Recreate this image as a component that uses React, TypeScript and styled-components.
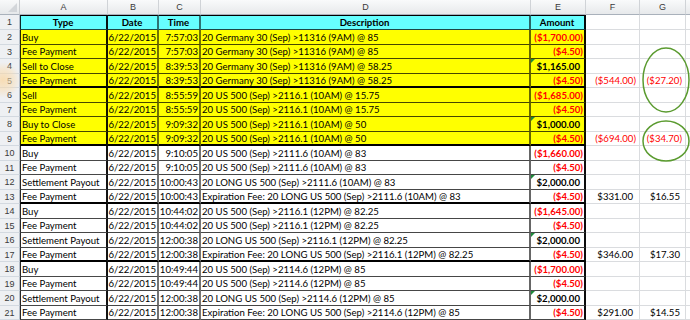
import React from 'react';
import styled, { createGlobalStyle } from 'styled-components';

const Global = createGlobalStyle`
  html, body { margin: 0; padding: 0; background: #fff; }
  body { font-family: Lato, "Liberation Sans", sans-serif; }
`;

type Col = 'a' | 'b' | 'c' | 'd' | 'e';

interface Row {
  type: string;
  date: string;
  time: string;
  desc: string;
  amt: string;
  f?: string;
  g?: string;
  yellow?: boolean;
  thick?: boolean;
}

const rows: Row[] = [
  { type: 'Buy', date: '6/22/2015', time: '7:57:03', desc: '20 Germany 30 (Sep) >11316 (9AM) @ 85', amt: '($1,700.00)', yellow: true },
  { type: 'Fee Payment', date: '6/22/2015', time: '7:57:03', desc: '20 Germany 30 (Sep) >11316 (9AM) @ 85', amt: '($4.50)', yellow: true },
  { type: 'Sell to Close', date: '6/22/2015', time: '8:39:53', desc: '20 Germany 30 (Sep) >11316 (9AM) @ 58.25', amt: '$1,165.00', yellow: true },
  { type: 'Fee Payment', date: '6/22/2015', time: '8:39:53', desc: '20 Germany 30 (Sep) >11316 (9AM) @ 58.25', amt: '($4.50)', f: '($544.00)', g: '($27.20)', yellow: true, thick: true },
  { type: 'Sell', date: '6/22/2015', time: '8:55:59', desc: '20 US 500 (Sep) >2116.1 (10AM) @ 15.75', amt: '($1,685.00)', yellow: true },
  { type: 'Fee Payment', date: '6/22/2015', time: '8:55:59', desc: '20 US 500 (Sep) >2116.1 (10AM) @ 15.75', amt: '($4.50)', yellow: true },
  { type: 'Buy to Close', date: '6/22/2015', time: '9:09:32', desc: '20 US 500 (Sep) >2116.1 (10AM) @ 50', amt: '$1,000.00', yellow: true },
  { type: 'Fee Payment', date: '6/22/2015', time: '9:09:32', desc: '20 US 500 (Sep) >2116.1 (10AM) @ 50', amt: '($4.50)', f: '($694.00)', g: '($34.70)', yellow: true, thick: true },
  { type: 'Buy', date: '6/22/2015', time: '9:10:05', desc: '20 US 500 (Sep) >2111.6 (10AM) @ 83', amt: '($1,660.00)' },
  { type: 'Fee Payment', date: '6/22/2015', time: '9:10:05', desc: '20 US 500 (Sep) >2111.6 (10AM) @ 83', amt: '($4.50)' },
  { type: 'Settlement Payout', date: '6/22/2015', time: '10:00:43', desc: '20 LONG US 500 (Sep) >2111.6 (10AM) @ 83', amt: '$2,000.00' },
  { type: 'Fee Payment', date: '6/22/2015', time: '10:00:43', desc: 'Expiration Fee: 20 LONG US 500 (Sep) >2111.6 (10AM) @ 83', amt: '($4.50)', f: '$331.00', g: '$16.55', thick: true },
  { type: 'Buy', date: '6/22/2015', time: '10:44:02', desc: '20 US 500 (Sep) >2116.1 (12PM) @ 82.25', amt: '($1,645.00)' },
  { type: 'Fee Payment', date: '6/22/2015', time: '10:44:02', desc: '20 US 500 (Sep) >2116.1 (12PM) @ 82.25', amt: '($4.50)' },
  { type: 'Settlement Payout', date: '6/22/2015', time: '12:00:38', desc: '20 LONG US 500 (Sep) >2116.1 (12PM) @ 82.25', amt: '$2,000.00' },
  { type: 'Fee Payment', date: '6/22/2015', time: '12:00:38', desc: 'Expiration Fee: 20 LONG US 500 (Sep) >2116.1 (12PM) @ 82.25', amt: '($4.50)', f: '$346.00', g: '$17.30', thick: true },
  { type: 'Buy', date: '6/22/2015', time: '10:49:44', desc: '20 US 500 (Sep) >2114.6 (12PM) @ 85', amt: '($1,700.00)' },
  { type: 'Fee Payment', date: '6/22/2015', time: '10:49:44', desc: '20 US 500 (Sep) >2114.6 (12PM) @ 85', amt: '($4.50)' },
  { type: 'Settlement Payout', date: '6/22/2015', time: '12:00:38', desc: '20 LONG US 500 (Sep) >2114.6 (12PM) @ 85', amt: '$2,000.00' },
  { type: 'Fee Payment', date: '6/22/2015', time: '12:00:38', desc: 'Expiration Fee: 20 LONG US 500 (Sep) >2114.6 (12PM) @ 85', amt: '($4.50)', f: '$291.00', g: '$14.55' },
];

const Sheet = styled.div`
  position: relative;
  display: grid;
  grid-template-columns: 20px 88px 51px 42px 330px 55px 54px 46px 40px;
  grid-template-rows: 15px 15px repeat(10, 15px 14px);
  width: 690px;
  height: 320px;
  overflow: hidden;
  font-size: 9.6px;
  color: #000;
`;

const Corner = styled.div`
  position: relative;
  box-sizing: border-box;
  background: linear-gradient(#f8f9fa, #e6e8ea);
  border-right: 1px solid #c9ccd0;
  border-bottom: 1px solid #a9b1bb;
  &::after {
    content: '';
    position: absolute;
    right: 2px;
    bottom: 2px;
    border-left: 9px solid transparent;
    border-bottom: 9px solid #d3d6da;
  }
`;

const ColHead = styled.div`
  box-sizing: border-box;
  background: linear-gradient(#f9fafb, #e7e9eb);
  border-right: 1px solid #d0d3d7;
  border-bottom: 1px solid #a9b1bb;
  display: flex;
  align-items: center;
  justify-content: center;
  color: #3a3a3a;
  font-family: "Liberation Sans", Arial, sans-serif;
  font-size: 9px;
`;

const RowHead = styled.div`
  box-sizing: border-box;
  background: #eef0f3;
  border-right: 1px solid #b4bdc8;
  border-bottom: 1px solid #d3d9e0;
  display: flex;
  align-items: center;
  justify-content: center;
  color: #3a3a3a;
  font-family: "Liberation Sans", Arial, sans-serif;
  font-size: 9px;
`;

const edgeAlpha: Record<Col, number> = { a: 0.92, b: 0.55, c: 0.55, d: 0.6, e: 0.95 };

const DataCell = styled.div<{
  $col: Col;
  $bg: string;
  $align: 'left' | 'right' | 'center';
  $thick?: boolean;
  $top?: boolean;
  $bold?: boolean;
  $red?: boolean;
  $pad?: number;
  $flag?: boolean;
}>`
  position: relative;
  box-sizing: border-box;
  min-width: 0;
  background: ${(p) => p.$bg};
  border-right: 2px solid rgba(0, 0, 0, ${(p) => edgeAlpha[p.$col]});
  border-left: ${(p) => (p.$col === 'a' ? '1px solid rgba(0,0,0,0.85)' : '0')};
  border-top: ${(p) => (p.$top ? '1px solid #000' : '0')};
  border-bottom: ${(p) => (p.$thick ? '2px solid #000' : '1px solid rgba(0,0,0,0.72)')};
  display: flex;
  align-items: center;
  justify-content: ${(p) => (p.$align === 'left' ? 'flex-start' : p.$align === 'right' ? 'flex-end' : 'center')};
  padding: 0 ${(p) => p.$pad ?? 1}px 0 ${(p) => (p.$align === 'left' ? 1 : 0)}px;
  white-space: nowrap;
  overflow: hidden;
  font-weight: ${(p) => (p.$bold ? 700 : 400)};
  color: ${(p) => (p.$red ? '#ff0000' : '#000')};
  &::before {
    content: '';
    display: ${(p) => (p.$flag ? 'block' : 'none')};
    position: absolute;
    left: 0;
    top: 0;
    border-top: 4px solid #1f8a3b;
    border-right: 4px solid transparent;
  }
`;

const Blank = styled.div<{ $red?: boolean; $pad: number }>`
  box-sizing: border-box;
  border-right: 1px solid #dadcdf;
  border-bottom: 1px solid #dadcdf;
  display: flex;
  align-items: center;
  justify-content: flex-end;
  padding-right: ${(p) => p.$pad}px;
  white-space: nowrap;
  color: ${(p) => (p.$red ? '#ff0000' : '#000')};
`;

const Overlay = styled.svg`
  position: absolute;
  left: 0;
  top: 0;
  pointer-events: none;
`;

const Glow = styled.div`
  position: absolute;
  left: -14px;
  top: 62px;
  width: 34px;
  height: 36px;
  border-radius: 50%;
  background: radial-gradient(circle, rgba(250, 214, 160, 0.75) 0%, rgba(250, 220, 175, 0.45) 45%, rgba(255, 230, 200, 0) 72%);
  pointer-events: none;
`;

const letters = ['A', 'B', 'C', 'D', 'E', 'F', 'G', ''];
const heads: { t: string; col: Col }[] = [
  { t: 'Type', col: 'a' },
  { t: 'Date', col: 'b' },
  { t: 'Time', col: 'c' },
  { t: 'Description', col: 'd' },
  { t: 'Amount', col: 'e' },
];

const isNeg = (v: string) => v.startsWith('(');

export default function App() {
  return (
    <>
      <Global />
      <Sheet>
        <Corner />
        {letters.map((l, i) => (
          <ColHead key={'h' + i}>{l}</ColHead>
        ))}
        <RowHead>1</RowHead>
        {heads.map((h) => (
          <DataCell key={h.t} $col={h.col} $bg="#66ffff" $align="center" $bold $top>
            {h.t}
          </DataCell>
        ))}
        <Blank $pad={2} />
        <Blank $pad={2} />
        <Blank $pad={2} />
        {rows.map((r, i) => {
          const bg = r.yellow ? '#ffff00' : '#ffffff';
          const neg = isNeg(r.amt);
          return (
            <React.Fragment key={i}>
              <RowHead>{i + 2}</RowHead>
              <DataCell $col="a" $bg={bg} $align="left" $thick={r.thick}>{r.type}</DataCell>
              <DataCell $col="b" $bg={bg} $align="right" $thick={r.thick}>{r.date}</DataCell>
              <DataCell $col="c" $bg={bg} $align="right" $thick={r.thick}>{r.time}</DataCell>
              <DataCell $col="d" $bg={bg} $align="left" $thick={r.thick}>{r.desc}</DataCell>
              <DataCell $col="e" $bg={bg} $align="right" $thick={r.thick} $bold $red={neg} $pad={neg ? 1 : 4} $flag={!neg}>
                {r.amt}
              </DataCell>
              <Blank $pad={r.f && !isNeg(r.f) ? 6 : 3} $red={r.f ? isNeg(r.f) : false}>{r.f}</Blank>
              <Blank $pad={r.g && !isNeg(r.g) ? 5 : 3} $red={r.g ? isNeg(r.g) : false}>{r.g}</Blank>
              <Blank $pad={2} />
            </React.Fragment>
          );
        })}
        <Glow />
        <Overlay width="690" height="320" viewBox="0 0 690 320">
          <ellipse cx="666" cy="80" rx="23" ry="32" fill="none" stroke="#5b9b30" strokeWidth="1.5" />
          <ellipse cx="666" cy="141" rx="23" ry="20" fill="none" stroke="#5b9b30" strokeWidth="1.5" />
        </Overlay>
      </Sheet>
    </>
  );
}
